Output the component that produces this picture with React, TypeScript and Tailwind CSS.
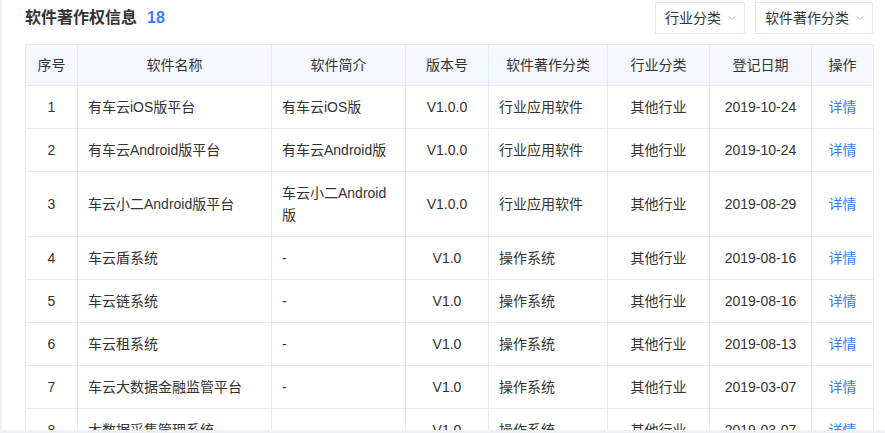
import { ChevronDown } from 'lucide-react';

const rows = [
  { no: 1, name: '有车云iOS版平台', brief: '有车云iOS版', ver: 'V1.0.0', type: '行业应用软件', ind: '其他行业', date: '2019-10-24' },
  { no: 2, name: '有车云Android版平台', brief: '有车云Android版', ver: 'V1.0.0', type: '行业应用软件', ind: '其他行业', date: '2019-10-24' },
  { no: 3, name: '车云小二Android版平台', brief: '车云小二Android版', ver: 'V1.0.0', type: '行业应用软件', ind: '其他行业', date: '2019-08-29' },
  { no: 4, name: '车云盾系统', brief: '-', ver: 'V1.0', type: '操作系统', ind: '其他行业', date: '2019-08-16' },
  { no: 5, name: '车云链系统', brief: '-', ver: 'V1.0', type: '操作系统', ind: '其他行业', date: '2019-08-16' },
  { no: 6, name: '车云租系统', brief: '-', ver: 'V1.0', type: '操作系统', ind: '其他行业', date: '2019-08-13' },
  { no: 7, name: '车云大数据金融监管平台', brief: '-', ver: 'V1.0', type: '操作系统', ind: '其他行业', date: '2019-03-07' },
  { no: 8, name: '大数据采集管理系统', brief: '-', ver: 'V1.0', type: '操作系统', ind: '其他行业', date: '2019-03-07' },
];

const headers = ['序号', '软件名称', '软件简介', '版本号', '软件著作分类', '行业分类', '登记日期', '操作'];
const widths = ['w-[52px]', 'w-[194px]', 'w-[134px]', 'w-[83px]', 'w-[119px]', 'w-[102px]', 'w-[102px]', 'w-[62px]'];

function Select({ label, width }: { label: string; width: string }) {
  return (
    <button className={`${width} h-[32px] pl-[9px] border border-[#e3eaf5] bg-white flex items-center gap-[5px] text-[14px] text-[#333]`}>
      <span>{label}</span>
      <ChevronDown size={12} strokeWidth={1.5} className="text-[#9aa3b2]" />
    </button>
  );
}

export default function App() {
  const td = 'border border-[#e3eaf5] px-[10px] py-[10px] leading-[22px]';
  return (
    <div
      className="w-[885px] h-[433px] bg-[#eef0f3] overflow-hidden"
      style={{ fontFamily: '"Liberation Sans", Arial, "Noto Sans CJK SC", sans-serif' }}
    >
      <div className="ml-[2px] h-[430px] bg-white overflow-hidden pl-[23px] pr-[12px] pt-[2px]">
        {/* Title bar */}
        <div className="h-[32px] flex items-center justify-between">
          <div className="flex items-center gap-[10px] font-bold text-[16px]">
            <span className="text-[#333]">软件著作权信息</span>
            <span className="text-[#3b7cff]">18</span>
          </div>
          <div className="flex gap-[10px]">
            <Select label="行业分类" width="w-[90px]" />
            <Select label="软件著作分类" width="w-[118px]" />
          </div>
        </div>

        {/* Table */}
        <table className="mt-[10px] w-[848px] table-fixed border-collapse text-[14px] text-[#333]">
          <colgroup>
            {widths.map((w, i) => (
              <col key={i} className={w} />
            ))}
          </colgroup>
          <thead>
            <tr className="bg-[#f5f8fe]">
              {headers.map((h) => (
                <th key={h} className="border border-[#e3eaf5] px-[10px] py-[9px] leading-[22px] font-normal text-center">
                  {h}
                </th>
              ))}
            </tr>
          </thead>
          <tbody>
            {rows.map((r) => (
              <tr key={r.no}>
                <td className={`${td} text-center`}>{r.no}</td>
                <td className={td}>{r.name}</td>
                <td className={td}>{r.brief}</td>
                <td className={`${td} text-center`}>{r.ver}</td>
                <td className={td}>{r.type}</td>
                <td className={`${td} text-center`}>{r.ind}</td>
                <td className={`${td} text-center`}>{r.date}</td>
                <td className={`${td} text-center text-[#3b7cff]`}>详情</td>
              </tr>
            ))}
          </tbody>
        </table>
      </div>
    </div>
  );
}
